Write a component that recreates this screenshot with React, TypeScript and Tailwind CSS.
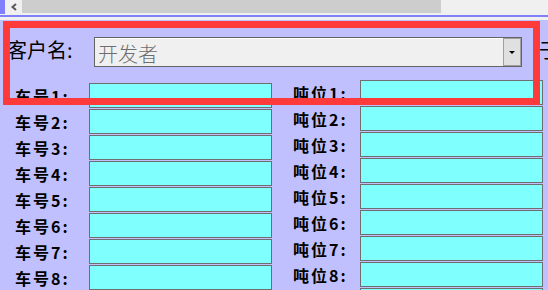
import React from 'react';

const cjk = '"Noto Sans CJK SC", "Liberation Sans", sans-serif';

const Field: React.FC<{ label: string; labelClass: string }> = (props) => {
  return (
    <div className="flex items-center h-[25px]">
      <div
        className={`${props.labelClass} text-[16px] font-bold leading-none text-black tracking-[2px]`}
      >
        {props.label}
      </div>
      <div className="w-[183px] h-[25px] bg-[#80ffff] border border-[#6e6e6e]" />
    </div>
  );
};

const ScrollBar: React.FC = () => {
  return (
    <div className="flex h-[15px] bg-[#f0f0f0]">
      <div className="w-[5px] h-[14px] bg-[#8080ff]" />
      <div className="w-[17px] h-[13px] bg-[#f0f0f0] flex items-center justify-center">
        <svg width="8" height="8" viewBox="0 0 8 8">
          <polyline
            points="6,1 2.5,4 6,7"
            fill="none"
            stroke="#5a5a5a"
            strokeWidth="2"
          />
        </svg>
      </div>
      <div className="w-[419px] h-[13px] bg-[#cdcdcd]" />
    </div>
  );
};

export default function App() {
  const rows = [1, 2, 3, 4, 5, 6, 7, 8];
  return (
    <div
      className="relative w-[548px] h-[290px] overflow-hidden bg-[#c0c0ff]"
      style={{ fontFamily: cjk }}
    >
      <ScrollBar />
      <div className="h-[2px] bg-[#8080f8]" />
      <div className="h-[3px] bg-[#f0f0f0]" />

      <div className="flex items-center mt-[17px] h-[30px]">
        <div className="shrink-0 pl-[7px] w-[94px] pb-[4px] text-[20px] leading-none text-black">
          客户名:
        </div>
        <div className="shrink-0 flex w-[428px] h-[30px] border border-[#646464] bg-[#f0f0f0]">
          <div className="flex-1 flex items-center pl-[3px] pt-[3px] border-t border-white text-[20px] leading-none font-light text-[#6d6d6d]">
            开发者
          </div>
          <div className="w-[18px] h-[28px] bg-[#e0e0e0] border border-[#a0a0a0] flex items-center justify-center">
            <svg width="8" height="5" viewBox="0 0 8 5">
              <polygon points="1,1 7,1 4,4" fill="#000" />
            </svg>
          </div>
        </div>
        <div className="shrink-0 ml-[17px] pb-[4px] text-[20px] leading-none text-black whitespace-nowrap">
          于
        </div>
      </div>

      <div className="flex">
        <div className="flex flex-col gap-[1px] pt-[16px] pl-[15px]">
          {rows.map((n) => (
            <Field key={n} label={`车号${n}:`} labelClass="w-[74px]" />
          ))}
        </div>
        <div className="flex flex-col gap-[1px] pt-[13px] pl-[21px]">
          {rows.map((n) => (
            <Field key={n} label={`吨位${n}:`} labelClass="w-[67px]" />
          ))}
          <Field label="" labelClass="w-[67px]" />
        </div>
      </div>

      <div className="absolute left-[3px] top-[21px] w-[537px] h-[84px] border-[7px] border-[#ff3a3a]" />
    </div>
  );
}
